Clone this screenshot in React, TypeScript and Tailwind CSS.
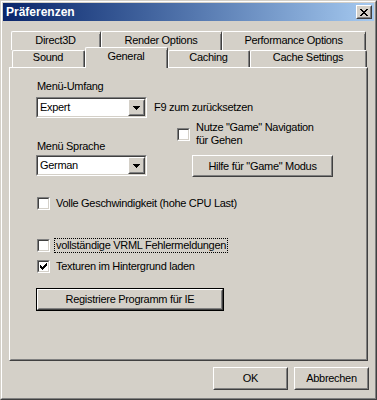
import React from 'react';

const CHECK = ['......X', '.....XX', 'X...XXX', 'XX.XXX.', 'XXXXX..', '.XXX...', '..X....'];
const CLOSE = ['XX....XX', '.XX..XX.', '..XXXX..', '...XX...', '..XXXX..', '.XX..XX.', 'XX....XX'];
const ARROW = ['XXXXXXX', '.XXXXX.', '..XXX..', '...X...'];

function Pixels({ rows }: { rows: string[] }) {
  const w = rows[0].length;
  const h = rows.length;
  return (
    <svg width={w} height={h} viewBox={`0 0 ${w} ${h}`} shapeRendering="crispEdges">
      {rows.flatMap((r, y) =>
        r.split('').map((c, x) => (c === 'X' ? <rect key={`${x}-${y}`} x={x} y={y} width={1} height={1} fill="#000" /> : null))
      )}
    </svg>
  );
}

function Raised({ className = '', children }: { className?: string; children?: React.ReactNode }) {
  return (
    <div className={`border border-t-white border-l-white border-r-[#404040] border-b-[#404040] bg-[#D4D0C8] ${className}`}>
      <div className="w-full h-full border border-t-[#D4D0C8] border-l-[#D4D0C8] border-r-[#808080] border-b-[#808080] flex items-center justify-center">
        {children}
      </div>
    </div>
  );
}

function Button({ label, className = '', isDefault = false }: { label: string; className?: string; isDefault?: boolean }) {
  if (isDefault) {
    return (
      <div className={`border border-black ${className}`}>
        <Raised className="w-full h-full">{label}</Raised>
      </div>
    );
  }
  return <Raised className={className}>{label}</Raised>;
}

function Sunken({ className = '', children }: { className?: string; children?: React.ReactNode }) {
  return (
    <div className={`border border-t-[#808080] border-l-[#808080] border-r-white border-b-white ${className}`}>
      <div className="w-full h-full border border-t-[#404040] border-l-[#404040] border-r-[#D4D0C8] border-b-[#D4D0C8] bg-white flex items-center">
        {children}
      </div>
    </div>
  );
}

function Checkbox({ checked = false }: { checked?: boolean }) {
  return (
    <Sunken className="w-[13px] h-[13px] shrink-0">
      <div className="w-full h-full flex items-center justify-center">{checked && <Pixels rows={CHECK} />}</div>
    </Sunken>
  );
}

function Combo({ value }: { value: string }) {
  return (
    <Sunken className="w-[111px] h-[21px]">
      <span className="flex-1 pl-[2px] leading-[13px]">{value}</span>
      <Raised className="w-[17px] h-[17px]">
        <Pixels rows={ARROW} />
      </Raised>
    </Sunken>
  );
}

function Tab({ label, className = '' }: { label: string; className?: string }) {
  return (
    <div className={`border-t border-l border-r border-t-white border-l-white border-r-[#404040] rounded-t-[2px] bg-[#D4D0C8] ${className}`}>
      <div className="w-full h-full border-r border-r-[#808080] flex justify-center leading-[13px]">{label}</div>
    </div>
  );
}

export default function App() {
  return (
    <div className="w-[377px] h-[400px] overflow-hidden border border-t-[#D4D0C8] border-l-[#D4D0C8] border-r-[#404040] border-b-[#404040] bg-[#D4D0C8] text-black text-[11px] tracking-[-0.3px] font-['Liberation_Sans',Arial,sans-serif]">
      <div className="h-full border border-t-white border-l-white border-r-[#808080] border-b-[#808080] p-px">
        {/* Title bar */}
        <div className="h-[18px] flex items-center justify-between bg-linear-to-r from-[#0A246A] to-[#A6CAF0] pl-[3px] pr-[2px]">
          <span className="text-white font-bold text-[12px] leading-[14px] tracking-normal">Präferenzen</span>
          <Raised className="w-[16px] h-[14px]">
            <Pixels rows={CLOSE} />
          </Raised>
        </div>

        <div className="pl-[6px]">
          {/* Tabs */}
          <div className="mt-[10px] flex ml-[2px] -mb-[3px]">
            <Tab label="Direct3D" className="w-[90px] h-[19px] pt-[2px]" />
            <Tab label="Render Options" className="w-[121px] h-[19px] pt-[2px]" />
            <Tab label="Performance Options" className="w-[144px] h-[19px] pt-[2px]" />
          </div>
          <div className="flex items-end ml-[3px] h-[20px]">
            <Tab label="Sound" className="w-[73px] h-[17px]" />
            <Tab label="General" className="w-[83px] h-[21px] pt-[2px] -mb-px relative z-10" />
            <Tab label="Caching" className="w-[82px] h-[17px]" />
            <Tab label="Cache Settings" className="w-[117px] h-[17px]" />
          </div>

          {/* Panel */}
          <div className="w-[359px] h-[294px] border border-t-white border-l-white border-r-[#404040] border-b-[#404040]">
            <div className="h-full border border-t-[#D4D0C8] border-l-[#D4D0C8] border-r-[#808080] border-b-[#808080] pl-[25px] pt-[11px] leading-[13px]">
              <div className="ml-px">Menü-Umfang</div>
              <div className="mt-[4px] flex items-center">
                <Combo value="Expert" />
                <span className="ml-[7px]">F9 zum zurücksetzen</span>
              </div>

              <div className="flex">
                <div className="w-[111px]">
                  <div className="mt-[22px] ml-px">Menü Sprache</div>
                  <div className="mt-[2px]">
                    <Combo value="German" />
                  </div>
                </div>
                <div className="ml-[30px]">
                  <div className="mt-[3px] flex items-center">
                    <Checkbox />
                    <div className="ml-[6px]">
                      <div>Nutze "Game" Navigation</div>
                      <div>für Gehen</div>
                    </div>
                  </div>
                  <Button label={'Hilfe für "Game" Modus'} className="mt-[8px] ml-[15px] w-[141px] h-[22px]" />
                </div>
              </div>

              <div className="mt-[20px] ml-px flex items-center h-[13px]">
                <Checkbox />
                <span className="ml-[6px]">Volle Geschwindigkeit (hohe CPU Last)</span>
              </div>

              <div className="mt-[28px] ml-px flex items-center h-[15px]">
                <Checkbox />
                <span className="ml-[4px] px-px border border-dotted border-black">vollständige VRML Fehlermeldungen</span>
              </div>

              <div className="mt-[7px] ml-px flex items-center h-[13px]">
                <Checkbox checked />
                <span className="ml-[6px]">Texturen im Hintergrund laden</span>
              </div>

              <Button label="Registriere Programm für IE" isDefault className="mt-[15px] w-[188px] h-[23px]" />
            </div>
          </div>

          {/* Footer */}
          <div className="mt-[6px] w-[360px] flex justify-end gap-[6px]">
            <Button label="OK" className="w-[75px] h-[23px]" />
            <Button label="Abbrechen" className="w-[75px] h-[23px]" />
          </div>
        </div>
      </div>
    </div>
  );
}
